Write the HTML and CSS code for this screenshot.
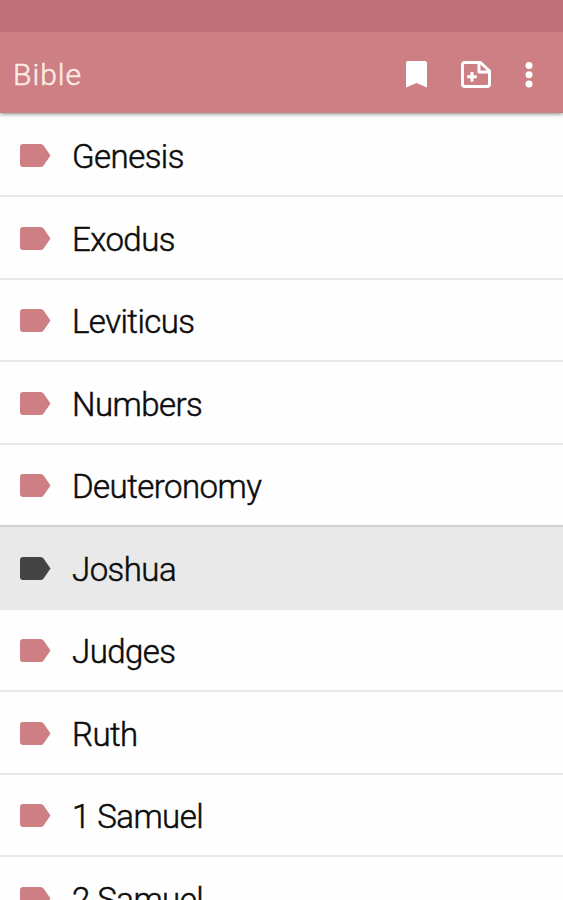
FILE: index.html
```html
<!doctype html>
<html lang="en">
  <head>
    <meta charset="UTF-8" />
    <meta name="viewport" content="width=device-width, initial-scale=1.0" />
    <title>Bible</title>
    <link rel="stylesheet" href="styles.css">
  </head>
  <body>
    <svg class="defs" aria-hidden="true">
      <symbol id="label" viewBox="0 0 31 23">
        <path d="M3 0H20.500Q22.500 0 23.600 1.600L30.500 11.500L23.600 21.400Q22.500 23 20.500 23H3Q0 23 0 20V3Q0 0 3 0Z" />
      </symbol>
    </svg>

    <div class="status-bar"></div>
    <header class="app-bar">
      <h1 class="title">Bible</h1>
      <div class="actions">
        <svg class="icon-bookmark" viewBox="0 0 21 27">
          <path d="M2 0H19Q21 0 21 2V26.500L10.500 22L0 26.500V2Q0 0 2 0Z" />
        </svg>
        <svg class="icon-note" viewBox="0 0 30 27">
          <path class="line" d="M4 1.500H19.500L28.500 10V23Q28.500 25.500 26 25.500H4Q1.500 25.500 1.500 23V4Q1.500 1.500 4 1.500Z" />
          <path class="line" d="M18 2V11H28" />
          <path class="line" d="M11 11V20.500M6.200 15.800H15.800" />
        </svg>
        <svg class="icon-more" viewBox="0 0 8 26">
          <circle cx="4" cy="3.500" r="3.500" />
          <circle cx="4" cy="12.700" r="3.500" />
          <circle cx="4" cy="22" r="3.500" />
        </svg>
      </div>
    </header>

    <ul class="books">
      <li class="book"><svg class="label"><use href="#label" /></svg><span>Genesis</span></li>
      <li class="book"><svg class="label"><use href="#label" /></svg><span>Exodus</span></li>
      <li class="book"><svg class="label"><use href="#label" /></svg><span>Leviticus</span></li>
      <li class="book"><svg class="label"><use href="#label" /></svg><span>Numbers</span></li>
      <li class="book before-selected"><svg class="label"><use href="#label" /></svg><span>Deuteronomy</span></li>
      <li class="book selected"><svg class="label"><use href="#label" /></svg><span>Joshua</span></li>
      <li class="book"><svg class="label"><use href="#label" /></svg><span>Judges</span></li>
      <li class="book"><svg class="label"><use href="#label" /></svg><span>Ruth</span></li>
      <li class="book"><svg class="label"><use href="#label" /></svg><span>1 Samuel</span></li>
      <li class="book"><svg class="label"><use href="#label" /></svg><span>2 Samuel</span></li>
    </ul>
  </body>
</html>
```
FILE: styles.css
```css
* {
  box-sizing: border-box;
}
body {
  margin: 0;
  height: 100vh;
  display: flex;
  flex-direction: column;
  overflow: hidden;
  background: #fefefe;
  font-family: Roboto, sans-serif;
}
.defs {
  display: none;
}
.status-bar {
  flex: none;
  height: 32px;
  background: #c07076;
  z-index: 2;
}
.app-bar {
  flex: none;
  display: flex;
  justify-content: space-between;
  align-items: center;
  height: 81px;
  padding: 5px 30.5px 0 13px;
  background: #cd7f84;
  box-shadow: 0 1px 4px rgba(60, 70, 50, 0.65);
  z-index: 1;
}
.title {
  margin: 0;
  color: #fcebe4;
  font-size: 30px;
  font-weight: 300;
  line-height: 36px;
  letter-spacing: 1px;
  -webkit-text-stroke: 0.5px;
}
.actions {
  display: flex;
  align-items: center;
  padding-bottom: 1px;
  fill: #fff;
}
.icon-bookmark {
  width: 21px;
  height: 27px;
  margin-right: 34px;
}
.icon-note {
  width: 30px;
  height: 27px;
  margin-right: 33.5px;
}
.icon-more {
  width: 8px;
  height: 26px;
}
.line {
  fill: none;
  stroke: #fff;
  stroke-width: 3;
  stroke-linejoin: round;
}
.books {
  flex: none;
  margin: 0;
  padding: 1.5px 0 0;
  list-style: none;
}
.book {
  display: flex;
  align-items: center;
  height: 82.5px;
  padding: 5px 0 0 20px;
  border-bottom: 2px solid #e8e8e8;
  color: #0c0c0c;
  font-size: 33px;
  font-weight: 300;
  line-height: 40px;
  letter-spacing: -0.55px;
  -webkit-text-stroke: 0.5px;
}
.label {
  width: 31px;
  height: 23px;
  margin: 0 21px 3px 0;
  fill: #cd7f84;
}
.before-selected {
  border-bottom-color: #d2d2d2;
}
.selected {
  background: #e9e9e9;
  border-bottom-color: #e9e9e9;
}
.selected .label {
  fill: #434343;
}
```
